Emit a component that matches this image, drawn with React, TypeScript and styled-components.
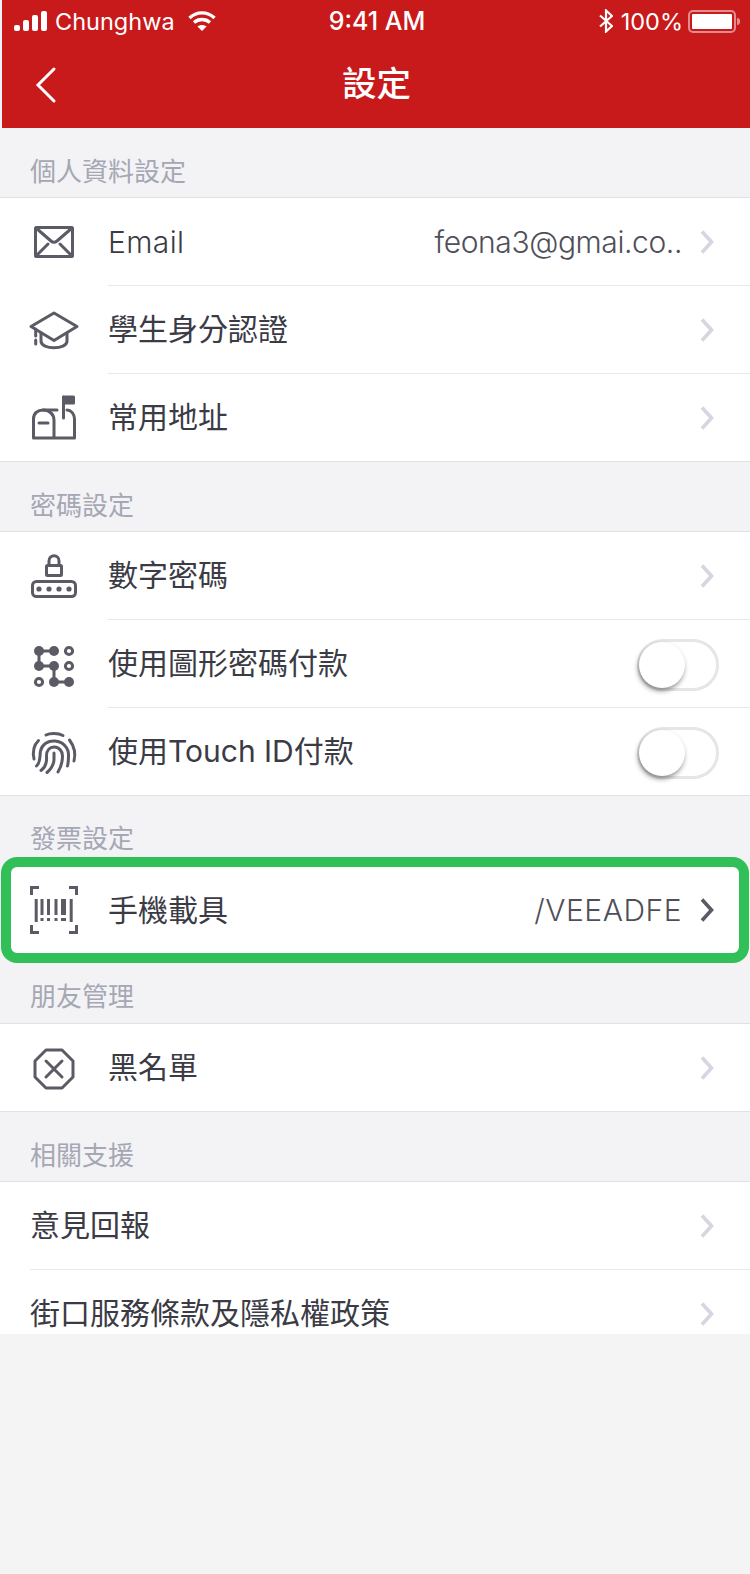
import React from 'react';
import styled, {createGlobalStyle} from 'styled-components';

const GlobalStyle = createGlobalStyle`
  html, body {
    margin: 0;
    padding: 0;
    background: #f4f4f4;
  }
  * {
    box-sizing: border-box;
  }
  body {
    font-family: Inter, "Noto Sans CJK TC", "Noto Sans", sans-serif;
  }
`;

const Stroke = styled.svg.attrs({viewBox: '0 0 60 60', fill: 'none'})`
  width: 60px;
  height: 60px;
  stroke: #5b5b65;
  stroke-width: 3;
  stroke-linecap: round;
  stroke-linejoin: round;
  flex: none;
`;

const MailIcon = () => (
  <Stroke>
    <rect x="11.5" y="15.5" width="37" height="29" rx="1" />
    <path d="M12 16 L27 29 Q30 31.5 33 29 L48 16" />
    <path d="M12 44 L24 32 M48 44 L36 32" />
  </Stroke>
);

const CapIcon = () => (
  <Stroke>
    <path d="M30 13 L53 26.5 L30 40.5 L7 26.5 Z" />
    <path d="M17 33 V41 C17 50 43 50 43 41 V33" />
    <path d="M11.7 29 V36 M11.7 40 V44" />
  </Stroke>
);

const MailboxIcon = () => (
  <Stroke>
    <path d="M30 50 H9.5 V31 C9.5 25 14 22 19 22 C25 22 30 26 30 32 V50 H50.5 V31 C50.5 26 47 22 43 22" />
    <path d="M19 22 H33" />
    <path d="M39.5 9 V30" />
    <rect x="39.5" y="9" width="10" height="6" fill="#5b5b65" />
    <path d="M15 35 H24" />
  </Stroke>
);

const KeypadIcon = () => (
  <Stroke>
    <rect x="22.5" y="19.5" width="15" height="10" rx="1" />
    <path d="M25 19 V15 C25 8 35 8 35 15 V19" />
    <rect x="8.5" y="35.5" width="43" height="15" rx="4" />
    {[15, 25, 35, 45].map((x) => (
      <circle key={x} cx={x} cy="43" r="2.6" fill="#5b5b65" stroke="none" />
    ))}
  </Stroke>
);

const PatternIcon = () => (
  <Stroke>
    <path d="M15 17 H30 M15 17 V32 H30 V48 H45" />
    {[[15, 17], [30, 17], [15, 32], [30, 32], [30, 48], [45, 48]].map(([x, y]) => (
      <circle key={`${x}-${y}`} cx={x} cy={y} r="5" fill="#5b5b65" stroke="none" />
    ))}
    {[[45, 17], [45, 32], [15, 48]].map(([x, y]) => (
      <circle key={`${x}-${y}`} cx={x} cy={y} r="3.6" />
    ))}
  </Stroke>
);

const FingerprintIcon = () => (
  <Stroke>
    <path d="M22 13 C26 11 34 11 39 13.5" />
    <path d="M14.5 18.5 C10 23 8.5 30 10 37" />
    <path d="M45.5 18 C50 24 52 31 50 39" />
    <path d="M12.5 44 C17 40 15.5 34 16.5 29 C18 22 24 18.5 31 19 C39 19.5 45 26 44.5 34 C44.5 37 44.5 40 43.5 44" />
    <path d="M17 48.5 C22 45 23 40 22.5 34 C22.5 28 26 25 30 25 C35 25 38.5 29 38.5 34 C38.5 40 37 45 34 50" />
    <path d="M30 31 V37 C30 42 27 47 23 50.5" />
  </Stroke>
);

const BarcodeIcon = () => (
  <Stroke style={{strokeLinecap: 'butt', strokeLinejoin: 'miter'}}>
    <path d="M7.5 15 V7.5 H15 M45 7.5 H52.5 V15 M7.5 45 V52.5 H15 M45 52.5 H52.5 V45" />
    <path d="M12.2 19 V42 M47.2 19 V42" />
    <path d="M18 19 V35 M18 38 V41 M24.5 19 V35 M24.5 38 V41 M32 19 V35 M32 38 V41" />
    <path d="M39.5 19 V35 M39.5 38 V41" style={{strokeWidth: 5}} />
  </Stroke>
);

const BlockIcon = () => (
  <Stroke>
    <path d="M22 12 H38 L49 23 V39 L38 50 H22 L11 39 V23 Z" />
    <path d="M22 23 L38 39 M38 23 L22 39" />
  </Stroke>
);

const Page = styled.div`
  min-height: 1574px;
  background: #f4f4f4;
  display: flex;
  flex-direction: column;
`;

const Top = styled.div`
  background: #f3f3f6;
  padding-left: 2px;
`;

const Header = styled.header`
  background: #c8191b;
  height: 128px;
  color: #fff;
`;

const StatusBar = styled.div`
  height: 42px;
  display: flex;
  align-items: center;
  position: relative;
  font-size: 23.5px;
  padding: 0 14px 0 12px;
`;

const Carrier = styled.span`
  margin-left: 8px;
  margin-right: 13px;
`;

const Clock = styled.span`
  position: absolute;
  left: 2px;
  right: 0;
  text-align: center;
  font-weight: 500;
  font-size: 25px;
`;

const StatusRight = styled.div`
  margin-left: auto;
  display: flex;
  align-items: center;
`;

const Percent = styled.span`
  margin: 0 5px 0 8px;
`;

const Battery = styled.div`
  width: 48px;
  height: 23px;
  border: 2px solid #e58b8c;
  border-radius: 5px;
  padding: 2px;
  position: relative;

  &::before {
    content: "";
    display: block;
    height: 100%;
    background: #fff;
    border-radius: 1px;
  }

  &::after {
    content: "";
    position: absolute;
    right: -6px;
    top: 6px;
    width: 3px;
    height: 7px;
    border-radius: 0 3px 3px 0;
    background: #e58b8c;
  }
`;

const NavBar = styled.div`
  height: 86px;
  display: flex;
  align-items: center;
  position: relative;
  padding-left: 33px;
`;

const Title = styled.h1`
  position: absolute;
  left: 1px;
  right: 0;
  margin: 0;
  text-align: center;
  font-size: 34.5px;
  font-weight: 500;
  top: 18px;
  line-height: 48px;
`;

const SectionLabel = styled.div<{$height?: number; $top?: number}>`
  height: ${(p) => p.$height ?? 69}px;
  background: #f3f3f6;
  color: #a5a7b4;
  font-size: 26px;
  line-height: 26px;
  padding-left: 30px;
  display: flex;
  align-items: center;
  padding-top: ${(p) => p.$top ?? 18}px;
`;

const List = styled.section<{$clipHeight?: number}>`
  background: #fff;
  border-top: 1px solid #e2e2e4;
  border-bottom: ${(p) => (p.$clipHeight ? 'none' : '1px solid #e2e2e4')};
  ${(p) => (p.$clipHeight ? `height: ${p.$clipHeight}px; overflow: hidden;` : '')}
`;

const Row = styled.div`
  display: flex;
  align-items: stretch;
  height: 88px;
  color: #3b3b45;
  font-size: 30px;

  &:last-child {
    height: 87px;
  }
`;

const IconSlot = styled.div`
  width: 108px;
  flex: none;
  padding-left: 24px;
  display: flex;
  align-items: center;
`;

const RowBody = styled.div<{$plain?: boolean}>`
  flex: 1;
  min-width: 0;
  margin-left: ${(p) => (p.$plain ? '30px' : '0')};
  padding-right: 36px;
  display: flex;
  align-items: center;
  border-bottom: 1px solid #e8e8ea;

  ${Row}:last-child & {
    border-bottom: none;
  }
`;

const RowText = styled.span<{$latin?: boolean}>`
  flex: 1;
  white-space: nowrap;
  padding-bottom: ${(p) => (p.$latin ? '0' : '5px')};
  font-weight: ${(p) => (p.$latin ? 300 : 400)};
  letter-spacing: ${(p) => (p.$latin ? '0.4px' : '0')};
`;

const RowValue = styled.span<{$spacing: number}>`
  color: #4f4f59;
  margin-right: 18px;
  white-space: nowrap;
  font-weight: 300;
  letter-spacing: ${(p) => p.$spacing}px;
`;

const Chevron = styled.svg.attrs({viewBox: '0 0 14 24', fill: 'none'})<{$dark?: boolean}>`
  width: 14px;
  height: 24px;
  flex: none;
  stroke: ${(p) => (p.$dark ? '#5b5b65' : '#d6d6e2')};
  stroke-width: 3.6;
`;

const Toggle = styled.div`
  width: 82px;
  height: 52px;
  border: 3px solid #e6e6e8;
  border-radius: 26px;
  margin: 3px -5px 0 0;
  position: relative;
  flex: none;

  &::after {
    content: "";
    position: absolute;
    left: -1px;
    top: 0;
    width: 46px;
    height: 46px;
    border-radius: 50%;
    background: #fff;
    box-shadow: -1px 3px 5px rgba(0, 0, 0, 0.42);
  }
`;

const Highlight = styled.section`
  height: 106px;
  margin: 0 1px;
  border: 10px solid #31bf57;
  border-radius: 16px;
  background: #fff;
  display: flex;
  align-items: center;
  color: #3b3b45;
  font-size: 30px;
`;

const HighlightWrap = styled.div`
  background: #f3f3f6;
`;

const HighlightIcon = styled(IconSlot)`
  width: 97px;
  padding-left: 13px;
`;

const HighlightBody = styled(RowBody)`
  border-bottom: none;
  padding-right: 25px;
  height: 100%;
`;

const Arrow = ({dark}: {dark?: boolean}) => (
  <Chevron $dark={dark}>
    <path d="M2 1.5 L11.5 12 L2 22.5" />
  </Chevron>
);

export default function App() {
  return (
    <Page>
      <GlobalStyle />
      <Top>
        <Header>
          <StatusBar>
            <svg width="33" height="20" viewBox="0 0 33 20" fill="#fff">
              <rect x="0" y="14" width="6" height="6" rx="2" />
              <rect x="9" y="9" width="6" height="11" rx="2" />
              <rect x="18" y="4" width="6" height="16" rx="2" />
              <rect x="27" y="0" width="6" height="20" rx="2" />
            </svg>
            <Carrier>Chunghwa</Carrier>
            <svg width="28" height="20" viewBox="0 0 28 20" fill="none" stroke="#fff" strokeWidth="3.4">
              <path d="M1.5 7 C8.5 0.2 19.5 0.2 26.5 7" />
              <path d="M6 11.5 C10.5 7.5 17.5 7.5 22 11.5" />
              <path d="M14 20 L9.5 15.5 C12 13.5 16 13.5 18.5 15.5 Z" fill="#fff" stroke="none" />
            </svg>
            <Clock>9:41 AM</Clock>
            <StatusRight>
              <svg width="14" height="24" viewBox="0 0 14 24" fill="none" stroke="#fff" strokeWidth="2.2">
                <path d="M1 6.5 L13 17 L7 22.5 V1.5 L13 7 L1 17.5" />
              </svg>
              <Percent>100%</Percent>
              <Battery />
            </StatusRight>
          </StatusBar>
          <NavBar>
            <svg width="22" height="38" viewBox="0 0 22 38" fill="none" stroke="#fff" strokeWidth="3" strokeLinecap="round">
              <path d="M19 3 L3 19 L19 35" />
            </svg>
            <Title>設定</Title>
          </NavBar>
        </Header>
      </Top>

      <SectionLabel>個人資料設定</SectionLabel>
      <List>
        <Row>
          <IconSlot><MailIcon /></IconSlot>
          <RowBody>
            <RowText $latin>Email</RowText>
            <RowValue $spacing={-0.4}>feona3@gmai.co..</RowValue>
            <Arrow />
          </RowBody>
        </Row>
        <Row>
          <IconSlot><CapIcon /></IconSlot>
          <RowBody>
            <RowText>學生身分認證</RowText>
            <Arrow />
          </RowBody>
        </Row>
        <Row>
          <IconSlot><MailboxIcon /></IconSlot>
          <RowBody>
            <RowText>常用地址</RowText>
            <Arrow />
          </RowBody>
        </Row>
      </List>

      <SectionLabel>密碼設定</SectionLabel>
      <List>
        <Row>
          <IconSlot><KeypadIcon /></IconSlot>
          <RowBody>
            <RowText>數字密碼</RowText>
            <Arrow />
          </RowBody>
        </Row>
        <Row>
          <IconSlot><PatternIcon /></IconSlot>
          <RowBody>
            <RowText>使用圖形密碼付款</RowText>
            <Toggle />
          </RowBody>
        </Row>
        <Row>
          <IconSlot><FingerprintIcon /></IconSlot>
          <RowBody>
            <RowText>使用Touch ID付款</RowText>
            <Toggle />
          </RowBody>
        </Row>
      </List>

      <SectionLabel $height={61} $top={25}>發票設定</SectionLabel>
      <HighlightWrap>
        <Highlight>
          <HighlightIcon><BarcodeIcon /></HighlightIcon>
          <HighlightBody>
            <RowText>手機載具</RowText>
            <RowValue $spacing={0.5}>/VEEADFE</RowValue>
            <Arrow dark />
          </HighlightBody>
        </Highlight>
      </HighlightWrap>

      <SectionLabel $height={60} $top={8}>朋友管理</SectionLabel>
      <List>
        <Row>
          <IconSlot><BlockIcon /></IconSlot>
          <RowBody>
            <RowText>黑名單</RowText>
            <Arrow />
          </RowBody>
        </Row>
      </List>

      <SectionLabel>相關支援</SectionLabel>
      <List $clipHeight={153}>
        <Row>
          <RowBody $plain>
            <RowText>意見回報</RowText>
            <Arrow />
          </RowBody>
        </Row>
        <Row>
          <RowBody $plain>
            <RowText>街口服務條款及隱私權政策</RowText>
            <Arrow />
          </RowBody>
        </Row>
      </List>
    </Page>
  );
}
